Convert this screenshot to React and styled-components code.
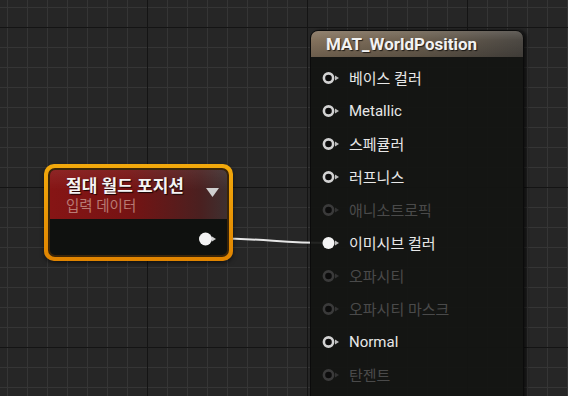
import React from "react";
import styled, { createGlobalStyle } from "styled-components";

const Global = createGlobalStyle`
  html, body { margin: 0; padding: 0; background: #262626; }
  body { font-family: Roboto, "Noto Sans CJK KR", sans-serif; }
`;

const Canvas = styled.div`
  position: relative;
  width: 568px;
  height: 396px;
  overflow: hidden;
  background-color: #262626;
  background-image:
    linear-gradient(to right, #141414 1px, transparent 1px),
    linear-gradient(to bottom, #141414 1px, transparent 1px),
    linear-gradient(to right, #353535 1px, transparent 1px),
    linear-gradient(to bottom, #353535 1px, transparent 1px);
  background-size: 160px 160px, 160px 160px, 20px 20px, 20px 20px;
  background-position: 147px 27px, 147px 27px, 7px 7px, 7px 7px;
`;

const Wires = styled.svg`
  position: absolute;
  left: 0;
  top: 0;
  width: 568px;
  height: 396px;
  z-index: 1;
`;

const InputNode = styled.div`
  position: absolute;
  left: 44px;
  top: 164px;
  width: 189px;
  height: 97px;
  box-sizing: border-box;
  padding: 4px;
  border-radius: 10px;
  background: linear-gradient(to bottom, #f2a90c, #e08400);
  box-shadow: 0 2px 4px rgba(0, 0, 0, 0.5);
  z-index: 2;
`;

const InputInner = styled.div`
  height: 100%;
  box-sizing: border-box;
  border: 2px solid #3b2508;
  border-radius: 7px;
  background: #0f110f;
  overflow: hidden;
  display: flex;
  flex-direction: column;
`;

const InputHeader = styled.div`
  height: 49px;
  flex: none;
  display: flex;
  align-items: flex-start;
  justify-content: space-between;
  padding: 5px 8px 0 16px;
  box-sizing: border-box;
  background:
    linear-gradient(to bottom, rgba(255, 255, 255, 0.07), rgba(0, 0, 0, 0) 40%),
    linear-gradient(to right, #861515 0%, #761313 45%, #4a2020 85%, #3e3030 100%);
`;

const TitleBlock = styled.div`
  display: flex;
  flex-direction: column;
`;

const InputTitle = styled.div`
  font-size: 17px;
  font-weight: 700;
  line-height: 22px;
  color: #f4f4f4;
  text-shadow: 1px 1px 1px rgba(0, 0, 0, 0.8);
`;

const InputSub = styled.div`
  font-size: 14.5px;
  line-height: 20px;
  color: #b97b74;
`;

const Caret = styled.svg`
  width: 13px;
  height: 9px;
  margin-top: 13px;
`;

const InputBody = styled.div`
  flex: 1;
  display: flex;
  align-items: center;
  justify-content: flex-end;
  padding: 3px 8px 0 0;
`;

const MaterialNode = styled.div`
  position: absolute;
  left: 310px;
  top: 30px;
  width: 214px;
  height: 380px;
  box-sizing: border-box;
  border: 1px solid #0b0b0b;
  border-radius: 8px 8px 0 0;
  background: rgba(19, 20, 18, 0.93);
  box-shadow: 3px 0 3px rgba(0, 0, 0, 0.55);
  display: flex;
  flex-direction: column;
  z-index: 2;
`;

const MaterialHeader = styled.div`
  height: 26px;
  flex: none;
  display: flex;
  align-items: center;
  padding-left: 15px;
  border-radius: 7px 7px 0 0;
  background:
    linear-gradient(to bottom, rgba(255, 255, 255, 0.12), rgba(0, 0, 0, 0) 35%, rgba(0, 0, 0, 0.18)),
    linear-gradient(to right, #84725d 0%, #6c6050 50%, #4c4843 100%);
`;

const MaterialTitle = styled.div`
  font-size: 17px;
  font-weight: 700;
  color: #f2f2f2;
  text-shadow: 1px 1px 1px rgba(0, 0, 0, 0.7);
`;

const PinList = styled.div`
  display: flex;
  flex-direction: column;
  padding-top: 4px;
`;

const PinRow = styled.div`
  height: 33px;
  display: flex;
  align-items: center;
  padding-left: 10px;
  gap: 6px;
`;

const PinLabel = styled.span`
  font-size: 15px;
  color: ${(p) => (p.$disabled ? "#4a4a4a" : "#e8e8e8")};
`;

const PinIcon = ({ state }) => {
  const ring = state === "disabled" ? "#3a3a3a" : "#d2d2d2";
  const arrow = state === "disabled" ? "#333" : "#bdbdbd";
  return (
    <svg width="22" height="14" viewBox="0 0 22 14">
      {state === "connected" ? (
        <circle cx="7.5" cy="7" r="6" fill="#f4f4f4" />
      ) : (
        <circle cx="7.5" cy="7" r="4.6" fill="#0c0c0c" stroke={ring} strokeWidth="2.6" />
      )}
      <polygon points="14,4.5 18,7 14,9.5" fill={arrow} />
    </svg>
  );
};

const pins = [
  { label: "베이스 컬러", state: "active" },
  { label: "Metallic", state: "active" },
  { label: "스페큘러", state: "active" },
  { label: "러프니스", state: "active" },
  { label: "애니소트로픽", state: "disabled" },
  { label: "이미시브 컬러", state: "connected" },
  { label: "오파시티", state: "disabled" },
  { label: "오파시티 마스크", state: "disabled" },
  { label: "Normal", state: "active" },
  { label: "탄젠트", state: "disabled" },
];

export default function App() {
  return (
    <>
      <Global />
      <Canvas>
        <Wires viewBox="0 0 568 396">
          <path d="M216,238.5 C270,238.5 276,243 330,243" stroke="#e6e6e6" strokeWidth="2" fill="none" />
        </Wires>
        <InputNode>
          <InputInner>
            <InputHeader>
              <TitleBlock>
                <InputTitle>절대 월드 포지션</InputTitle>
                <InputSub>입력 데이터</InputSub>
              </TitleBlock>
              <Caret viewBox="0 0 13 9">
                <polygon points="0,0 13,0 6.5,9" fill="#cfcfcf" />
              </Caret>
            </InputHeader>
            <InputBody>
              <svg width="20" height="14" viewBox="0 0 20 14">
                <circle cx="6.5" cy="7" r="6.5" fill="#f4f4f4" />
                <polygon points="13,4.5 17,7 13,9.5" fill="#d0d0d0" />
              </svg>
            </InputBody>
          </InputInner>
        </InputNode>
        <MaterialNode>
          <MaterialHeader>
            <MaterialTitle>MAT_WorldPosition</MaterialTitle>
          </MaterialHeader>
          <PinList>
            {pins.map((p) => (
              <PinRow key={p.label}>
                <PinIcon state={p.state} />
                <PinLabel $disabled={p.state === "disabled"}>{p.label}</PinLabel>
              </PinRow>
            ))}
          </PinList>
        </MaterialNode>
      </Canvas>
    </>
  );
}
